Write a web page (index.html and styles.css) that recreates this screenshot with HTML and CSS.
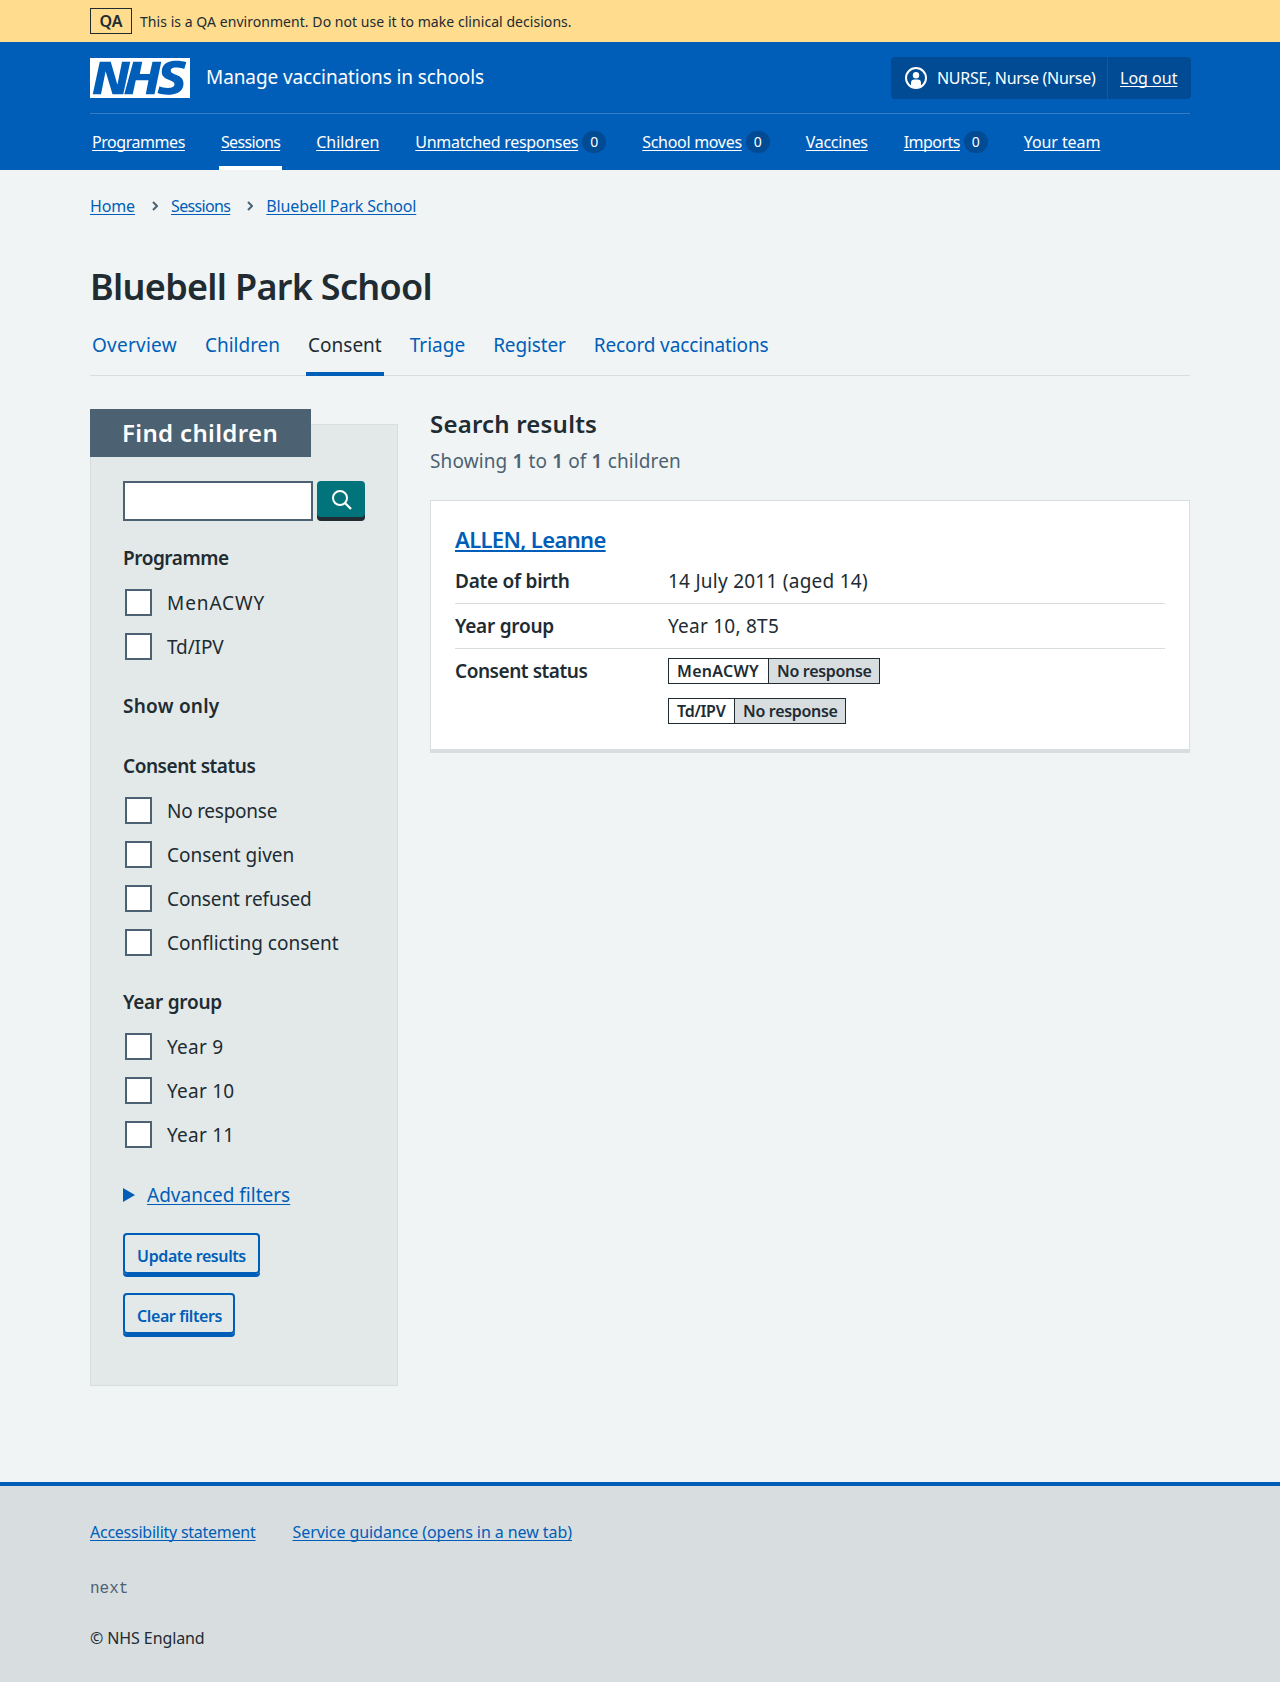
FILE: index.html
```html
<!DOCTYPE html>
<html lang="en">
<head>
<meta charset="utf-8">
<title>Bluebell Park School – Manage vaccinations in schools</title>
<link rel="stylesheet" href="styles.css">
</head>
<body>
<div class="environment">
  <div class="container environment-inner">
    <strong class="environment-tag">QA</strong>
    <span class="environment-text">This is a QA environment. Do not use it to make clinical decisions.</span>
  </div>
</div>
<header class="header">
  <div class="container">
    <div class="header-top">
      <svg class="logo" viewBox="0 0 40 16" width="100" height="40" role="img" aria-label="NHS"><path fill="#fff" d="M0 0h40v16H0z"/><path fill="#005eb8" d="M3.9 1.5h4.4l2.6 9h.1l1.8-9h3.3l-2.8 13H9l-2.7-9h-.1l-1.8 9H1.1M17.3 1.5h3.6l-1 4.9h4L25 1.5h3.5l-2.7 13h-3.5l1.1-5.6h-5.1l-1.2 5.6h-3.4M37.7 4.4c-.7-.3-1.6-.6-2.9-.6-1.4 0-2.5.2-2.5 1.3 0 1.8 5.1 1.2 5.1 5.1 0 3.6-3.3 4.5-6.4 4.5-1.3 0-2.9-.3-4-.7l.8-2.7c.7.4 2.1.7 3.2.7s2.8-.2 2.8-1.5c0-2.1-5.1-1.3-5.1-5 0-3.4 2.9-4.4 5.8-4.4 1.6 0 3.1.2 4 .6"/></svg>
      <span class="service">Manage vaccinations in schools</span>
      <div class="account">
        <div class="account-user">
          <svg width="22" height="22" viewBox="0 0 22 22"><circle cx="11" cy="11" r="10" fill="none" stroke="#fff" stroke-width="2"/><circle cx="11" cy="8.300" r="3.200" fill="#fff"/><path d="M6 18.800V16a3.400 3.400 0 0 1 3.400-3.400h3.200a3.400 3.400 0 0 1 3.400 3.400v2.800A10 10 0 0 1 11 20.400a10 10 0 0 1-5-1.600z" fill="#fff"/></svg>
          <span>NURSE, Nurse (Nurse)</span>
        </div>
        <div class="account-logout"><a href="#">Log out</a></div>
      </div>
    </div>
    <nav class="nav">
      <div class="nav-item tight"><a href="#">Programmes</a></div>
      <div class="nav-item current tighter"><a href="#">Sessions</a></div>
      <div class="nav-item normal"><a href="#">Children</a></div>
      <div class="nav-item"><a href="#">Unmatched responses</a><span class="count">0</span></div>
      <div class="nav-item"><a href="#">School moves</a><span class="count">0</span></div>
      <div class="nav-item"><a href="#">Vaccines</a></div>
      <div class="nav-item imports"><a href="#">Imports</a><span class="count">0</span></div>
      <div class="nav-item team"><a href="#">Your team</a></div>
    </nav>
  </div>
</header>
<div class="container">
  <nav class="breadcrumb">
    <a href="#">Home</a>
    <svg width="6" height="10" viewBox="0 0 6 10"><path d="M1 1l4 4-4 4" fill="none" stroke="#4c6272" stroke-width="2"/></svg>
    <a href="#" class="tighter">Sessions</a>
    <svg width="6" height="10" viewBox="0 0 6 10"><path d="M1 1l4 4-4 4" fill="none" stroke="#4c6272" stroke-width="2"/></svg>
    <a href="#">Bluebell Park School</a>
  </nav>
  <main>
    <h1>Bluebell Park School</h1>
    <nav class="tabs">
      <a href="#" class="wide">Overview</a>
      <a href="#">Children</a>
      <a href="#" class="selected">Consent</a>
      <a href="#">Triage</a>
      <a href="#" class="snug">Register</a>
      <a href="#" class="snug">Record vaccinations</a>
    </nav>
    <div class="columns">
      <form class="filters">
        <h2 class="filters-heading">Find children</h2>
        <div class="search">
          <input class="search-input" type="text" aria-label="Search">
          <button class="search-button" type="button" aria-label="Search"><svg width="20" height="20" viewBox="0 0 20 20"><circle cx="8" cy="8" r="7" fill="none" stroke="#fff" stroke-width="2"/><path d="M13 13l6 6" stroke="#fff" stroke-width="2.300"/></svg></button>
        </div>
        <fieldset class="first">
          <legend class="tight">Programme</legend>
          <label class="widest"><input type="checkbox">MenACWY</label>
          <label class="snug"><input type="checkbox">Td/IPV</label>
        </fieldset>
        <fieldset>
          <legend class="wide">Show only</legend>
        </fieldset>
        <fieldset>
          <legend class="tight">Consent status</legend>
          <label class="narrow"><input type="checkbox">No response</label>
          <label><input type="checkbox">Consent given</label>
          <label class="snug"><input type="checkbox">Consent refused</label>
          <label><input type="checkbox">Conflicting consent</label>
        </fieldset>
        <fieldset>
          <legend class="narrow">Year group</legend>
          <label class="wide"><input type="checkbox">Year 9</label>
          <label class="wide"><input type="checkbox">Year 10</label>
          <label class="wide"><input type="checkbox">Year 11</label>
        </fieldset>
        <div class="advanced">
          <svg width="12" height="14" viewBox="0 0 12 14"><path d="M0 0l12 7-12 7z" fill="#005eb8"/></svg>
          <a href="#">Advanced filters</a>
        </div>
        <button class="button update" type="button">Update results</button>
        <button class="button clear" type="button">Clear filters</button>
      </form>
      <section class="results">
        <h2>Search results</h2>
        <p class="caption">Showing <b>1</b> to <b>1</b> of <b>1</b> children</p>
        <article class="card">
          <h3><a href="#">ALLEN, Leanne</a></h3>
          <dl>
            <div class="row"><dt class="narrow">Date of birth</dt><dd class="wide">14 July 2011 (aged 14)</dd></div>
            <div class="row"><dt class="narrow">Year group</dt><dd class="wide">Year 10, 8T5</dd></div>
            <div class="row"><dt class="tight">Consent status</dt><dd class="tags">
              <span class="tag"><strong class="tag-a">MenACWY</strong><strong class="tag-b">No response</strong></span>
              <span class="tag"><strong class="tag-a tdipv">Td/IPV</strong><strong class="tag-b">No response</strong></span>
            </dd></div>
          </dl>
        </article>
      </section>
    </div>
  </main>
</div>
<footer class="footer">
  <div class="container">
    <div class="footer-links"><a href="#" class="narrow">Accessibility statement</a><a href="#">Service guidance (opens in a new tab)</a></div>
    <p class="version">next</p>
    <p class="copyright">© NHS England</p>
  </div>
</footer>
</body>
</html>
```
FILE: styles.css
```css
* { box-sizing: border-box; }
body {
  margin: 0;
  background: #f0f4f5;
  color: #212b32;
  font: 19px/28px "Noto Sans", "Open Sans", sans-serif;
}
a { color: #005eb8; text-underline-offset: 2px; text-decoration-thickness: 1px; text-decoration-skip-ink: none; }
h1, h2, h3, p, dl, dd, fieldset { margin: 0; padding: 0; }
svg { display: block; flex: none; }
.container { width: 1100px; margin: 0 auto; }

.environment { height: 42px; background: #ffdc8e; }
.environment-inner { display: flex; align-items: center; gap: 8px; height: 42px; font-size: 14px; letter-spacing: 0.05px; }
.environment-tag { width: 42px; height: 26px; border: 1px solid #212b32; font-size: 16px; line-height: 24px; font-weight: 600; text-align: center; }
.environment-text { padding-top: 1px; }

.header { height: 128px; background: #005eb8; color: #fff; }
.header a { color: #fff; }
.header-top { display: flex; align-items: center; height: 72px; border-bottom: 1px solid #337ec6; }
.service { margin-left: 16px; padding-bottom: 1px; letter-spacing: -0.1px; }
.account { display: flex; height: 42px; margin: 0 -1px 0 auto; border-radius: 4px; background: #004b93; font-size: 16px; letter-spacing: -0.3px; }
.account-user { display: flex; align-items: center; gap: 10px; width: 217px; padding-left: 14px; border-right: 1px solid #005eb8; white-space: nowrap; }
.account-logout { width: 83px; padding: 7px 12px; letter-spacing: 0; }
.nav { display: flex; gap: 32px; height: 56px; font-size: 16px; line-height: 56px; letter-spacing: -0.3px; }
.nav-item { display: flex; align-items: center; padding: 0 2px; border-bottom: 4px solid transparent; border-top: 4px solid transparent; white-space: nowrap; }
.nav-item.current { border-bottom-color: #fff; }
.nav-item.normal { letter-spacing: -0.02px; }
.nav-item.imports { letter-spacing: -0.55px; }
.nav-item.team { letter-spacing: -0.1px; }
.count { width: 24px; height: 22px; margin-left: 4px; border-radius: 12px; background: #004b93; font-size: 14px; line-height: 22px; text-align: center; letter-spacing: 0; }

.breadcrumb { display: flex; align-items: center; height: 24px; margin-top: 24px; font-size: 16px; line-height: 24px; letter-spacing: -0.13px; }
.breadcrumb svg { margin: 0 13px 0 17px; }
h1 { margin-top: 42px; font-size: 36px; line-height: 54px; font-weight: 600; letter-spacing: -0.7px; }
.tabs { display: flex; gap: 24px; height: 62px; border-bottom: 1px solid #d8dde0; }
.tabs a { height: 62px; padding: 17px 2px 0; text-decoration: none; white-space: nowrap; }
.tabs .selected { border-bottom: 4px solid #005eb8; color: #212b32; }

.widest { letter-spacing: 0.9px; }
.wide { letter-spacing: 0.25px; }
.snug { letter-spacing: -0.13px; }
.narrow { letter-spacing: -0.25px; }
.tight { letter-spacing: -0.45px; }
.tighter { letter-spacing: -0.65px; }

.columns { display: flex; align-items: flex-start; gap: 32px; }
.filters { width: 308px; height: 962px; margin-top: 48px; padding: 0 32px; border: 1px solid #d8dde0; background: #e3e9e9; }
.filters-heading { width: 221px; height: 48px; margin: -16px 0 0 -33px; padding-left: 32px; background: #4c6272; color: #fff; font-size: 24px; line-height: 48px; font-weight: 600; letter-spacing: 0.35px; white-space: nowrap; }
.search { display: flex; gap: 4px; margin-top: 24px; }
.search-input { width: 190px; height: 40px; border: 2px solid #4c6272; border-radius: 0; background: #fff; }
.search-button { display: flex; justify-content: center; width: 48px; height: 36px; padding: 9px 0 0 1px; border: 0; border-radius: 4px; background: #00747a; box-shadow: 0 4px 0 #212b32; }
fieldset { display: flow-root; min-width: 0; margin-top: 18px; border: 0; }
fieldset.first { margin-top: 23px; }
legend { padding: 0; margin-bottom: 14px; font-weight: 600; line-height: 28px; }
fieldset label { display: flex; align-items: center; height: 44px; padding-bottom: 11px; white-space: nowrap; }
input[type="checkbox"] { appearance: none; flex: none; width: 27px; height: 27px; margin: 0 15px 0 2px; border: 2px solid #4c6272; background: #fff; }
.advanced { display: flex; align-items: center; gap: 12px; height: 28px; margin-top: 19px; }
.button { display: block; height: 41px; padding: 3px 12px 0; border: 2px solid #005eb8; border-radius: 4px; background: transparent; box-shadow: 0 3px 0 #005eb8; color: #005eb8; font: 600 16px/36px "Noto Sans", sans-serif; white-space: nowrap; letter-spacing: -0.4px; }
.update { width: 137px; margin-top: 24px; }
.clear { width: 112px; margin-top: 19px; }

.results { flex: 1; padding-top: 32px; }
.results h2 { font-size: 24px; line-height: 32px; font-weight: 600; letter-spacing: 0.2px; }
.caption { margin-top: 7px; color: #4c6272; letter-spacing: 0.12px; }
.caption b { font-weight: 600; }
.card { height: 253px; margin-top: 25px; padding: 22px 24px; border: 1px solid #d8dde0; border-bottom-width: 4px; background: #fff; }
.card h3 { margin-bottom: 4px; font-size: 22px; line-height: 32px; font-weight: 600; letter-spacing: -0.65px; }
.card h3 a { text-decoration-thickness: 2px; }
.row { display: flex; height: 45px; padding-top: 8px; border-bottom: 1px solid #d8dde0; }
.row:last-child { border: 0; }
dt { width: 213px; font-weight: 600; }
.tags { display: flex; flex-direction: column; align-items: flex-start; gap: 14px; padding-top: 1px; }
.tag { display: flex; height: 26px; border: 1px solid #212b32; font-size: 16px; line-height: 24px; white-space: nowrap; letter-spacing: -0.3px; }
.tag strong { font-weight: 600; }
.tag-a { width: 100px; padding-left: 8px; border-right: 1px solid #212b32; letter-spacing: 0.3px; }
.tag-a.tdipv { width: 66px; letter-spacing: -0.3px; }
.tag-b { width: 110px; padding-left: 8px; background: #d8dde0; }

.footer { height: 200px; margin-top: 96px; border-top: 4px solid #005eb8; background: #d8dde0; font-size: 16px; line-height: 24px; }
.footer-links { display: flex; gap: 37px; padding-top: 34px; letter-spacing: -0.07px; }
.version { margin-top: 33px; color: #4c6272; font-family: "Liberation Mono", monospace; }
.copyright { margin-top: 25px; letter-spacing: -0.1px; }
```
